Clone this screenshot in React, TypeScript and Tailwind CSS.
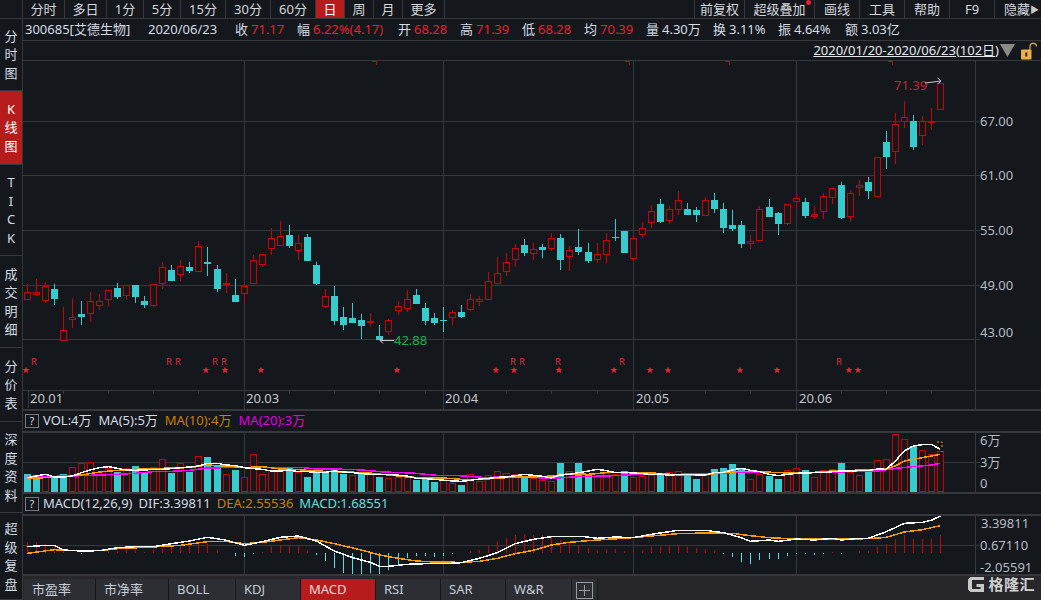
const BG = "#14171c";
const GRID = "#37383b";
const RED = "#cc0000";
const CYAN = "#38cbce";

// candle x positions: the original chart drops one extra pixel every ~20 bars
const barX = (i: number) =>
  27.5 + 9 * i + (i > 20 ? 1 : 0) + (i > 40 ? 1 : 0) + (i > 61 ? 1 : 0) + (i > 81 ? 1 : 0);

type Candle = [string, number, number, number, number];

const a: Candle[] = [
  ["r", 252, 277, 297, 300], ["r", 237, 276, 282, 287], ["r", 247, 259, 302, 308], ["c", 252, 267, 297, 315],
  ["r", 321, 391, 422, 422], ["r", 294, 352, 358, 384], ["c", 303, 342, 351, 375], ["r", 276, 304, 340, 366],
  ["r", 282, 304, 316, 330], ["r", 270, 271, 298, 321], ["c", 249, 264, 291, 297], ["r", 255, 256, 286, 300],
  ["c", 255, 255, 291, 309], ["c", 288, 303, 315, 324], ["r", 252, 253, 316, 321], ["r", 186, 202, 250, 267],
  ["c", 195, 210, 243, 243], ["r", 180, 199, 223, 243], ["c", 186, 201, 213, 219], ["r", 123, 139, 215, 215],
  ["c", 141, 186, 191, 228], ["c", 195, 207, 267, 276], ["r", 219, 249, 251, 279], ["c", 237, 285, 305, 305],
  ["r", 252, 258, 280, 312], ["r", 165, 181, 250, 250], ["r", 163, 163, 193, 201], ["r", 84, 115, 146, 165],
  ["r", 63, 109, 136, 136], ["c", 75, 105, 138, 144], ["r", 105, 130, 151, 180], ["c", 102, 111, 183, 183],
  ["c", 186, 195, 251, 255], ["r", 267, 289, 319, 324], ["c", 258, 288, 362, 375], ["c", 321, 351, 375, 390],
];

const b: Candle[] = [
  ["c", 369, 414, 429, 429], ["c", 402, 420, 438, 477], ["r", 399, 423, 425, 441], ["c", 435, 468, 480, 480],
  ["r", 418, 421, 455, 465], ["r", 363, 379, 392, 405], ["r", 330, 358, 386, 396], ["c", 327, 345, 372, 372],
  ["c", 369, 384, 423, 435], ["c", 399, 414, 429, 435], ["c", 381, 420, 423, 456], ["r", 390, 397, 413, 435],
  ["c", 375, 396, 411, 414], ["r", 342, 358, 389, 393], ["r", 348, 358, 365, 378], ["r", 276, 304, 359, 359],
  ["r", 231, 280, 311, 311], ["r", 219, 247, 275, 288], ["r", 192, 205, 239, 261], ["c", 177, 195, 219, 228],
  ["r", 189, 208, 220, 240], ["c", 192, 201, 210, 234], ["r", 159, 175, 206, 213], ["c", 162, 174, 240, 270],
  ["r", 198, 211, 230, 273], ["c", 147, 201, 216, 225], ["c", 189, 216, 243, 249], ["r", 189, 223, 239, 249],
  ["r", 159, 181, 223, 249], ["c", 117, 171, 174, 183], ["c", 153, 153, 219, 219], ["r", 165, 175, 236, 243],
  ["r", 126, 145, 163, 174], ["r", 75, 94, 127, 144], ["c", 57, 72, 126, 129], ["r", 78, 88, 121, 132],
  ["r", 33, 61, 88, 105], ["c", 69, 87, 105, 105], ["c", 81, 90, 105, 126],
];

const c: Candle[] = [
  ["r", 381, 391, 437, 437], ["c", 369, 390, 417, 429], ["c", 399, 417, 474, 489], ["c", 420, 465, 477, 483],
  ["c", 453, 465, 522, 534], ["r", 495, 514, 521, 537], ["r", 408, 418, 512, 512], ["c", 387, 411, 441, 441],
  ["c", 426, 429, 462, 495], ["r", 403, 403, 461, 465], ["r", 369, 385, 395, 417], ["c", 384, 396, 438, 444],
  ["r", 408, 432, 437, 447], ["r", 369, 379, 424, 447], ["r", 354, 355, 382, 402], ["c", 336, 345, 444, 447],
  ["r", 360, 370, 440, 456], ["r", 330, 346, 353, 378], ["c", 321, 336, 363, 387], ["r", 262, 262, 380, 380],
  ["c", 183, 216, 261, 297], ["r", 129, 163, 244, 282], ["r", 93, 142, 155, 174], ["c", 135, 153, 231, 240],
  ["r", 138, 154, 196, 225], ["r", 114, 153, 155, 180], ["r", 40, 40, 118, 118],
];

const scale = (list: Candle[], base: number) =>
  list.map(([t, w1, o, cl, w2]) => [t, base + w1 / 3, base + o / 3, base + cl / 3, base + w2 / 3] as Candle);

const candles = [...scale(a, 200), ...scale(b, 180), ...scale(c, 70)];

const volTypes =
  "ccrccrrrrrcrccrrcrcrccrcrrrrrcrccccc" + "rcrcrrrcccrrcrrrrrrcrrrcrccrrrcrrrcrrcc" + "rccccrrccrrcrrrcrrcrrrrcrrr";
const volTops = [
  219, 222, 223, 231, 220, 199, 186, 184, 212, 202, 213, 200, 195, 213, 197, 175, 216, 186, 213, 166, 168, 195, 220, 207, 229, 160,
  220, 208, 211, 202, 212, 228, 212, 214, 203, 218,
  222, 218, 215, 228, 232, 228, 228, 237, 230, 243, 235, 246, 252, 220, 240, 223, 211, 217, 220, 230, 230, 237, 241, 186, 211, 186,
  222, 223, 216, 220, 210, 229, 226, 222, 218, 214, 211, 218, 234,
  222, 204, 201, 189, 204, 235, 218, 225, 234, 208, 202, 207, 229, 208, 205, 186, 214, 223, 214, 178, 175, 95, 115, 135, 148, 160, 151,
];
const macdTops = [
  423, 423, 430, 433, 445, 456, 458, 456, 456, 450, 449, 445, 448, 453, 447, 440, 435, 433, 432, 427, 428, 446, 456, 466, 468, 460,
  453, 438, 433, 435, 435, 448, 462, 480, 500, 515,
  518, 518, 515, 518, 508, 492, 472, 465, 465, 467, 465, 459, 457, 450, 447, 434, 421, 412, 402, 400, 401, 403, 404, 418, 425, 431,
  442, 448, 445, 445, 450, 448, 446, 438, 437, 435, 433, 438, 440,
  444, 448, 460, 468, 482, 488, 477, 473, 473, 465, 458, 460, 462, 458, 453, 460, 456, 450, 450, 438, 430, 414, 402, 414, 413, 414, 402,
];

// [x, y] pairs as read off the three crops, x offset per crop
const line = (parts: [number, number[]][]) =>
  parts
    .flatMap(([dx, p]) => {
      const out: string[] = [];
      for (let i = 0; i < p.length; i += 2) out.push(`${dx + p[i] / 3},${400 + p[i + 1] / 3}`);
      return out;
    })
    .join(" ");

const ma5 = line([
  [0, [82, 230, 136, 220, 163, 228, 190, 228, 217, 225, 244, 215, 271, 207, 298, 200, 325, 197, 352, 202, 379, 207, 406, 208, 433, 207, 460, 205, 487, 205, 514, 203, 541, 200, 568, 198, 595, 195, 622, 187, 652, 187, 679, 192, 706, 194, 733, 200, 760, 203, 787, 205, 814, 210, 841, 210, 868, 207, 895, 212, 922, 212, 949, 214, 976, 214, 1003, 210, 1030, 213]],
  [350, [8, 215, 61, 220, 115, 220, 172, 225, 199, 232, 226, 233, 253, 235, 307, 240, 334, 241, 361, 238, 388, 234, 415, 232, 442, 229, 469, 228, 496, 224, 523, 220, 550, 223, 577, 226, 604, 231, 631, 222, 658, 220, 685, 215, 715, 210, 742, 205, 769, 209, 796, 215, 823, 214, 850, 216, 877, 218, 904, 221, 931, 219, 958, 223, 985, 220]],
  [690, [46, 222, 73, 215, 100, 214, 127, 207, 154, 202, 181, 208, 208, 212, 238, 220, 265, 224, 292, 220, 319, 217, 346, 216, 373, 215, 400, 215, 427, 212, 454, 210, 481, 210, 508, 209, 535, 209, 562, 204, 589, 205, 616, 180, 643, 150, 670, 135, 697, 131, 724, 130, 751, 145]],
]);
const ma10 = line([
  [0, [82, 232, 136, 230, 190, 227, 244, 222, 298, 213, 352, 208, 406, 205, 460, 203, 514, 201, 568, 200, 622, 192, 676, 195, 730, 200, 787, 197, 841, 204, 895, 206, 949, 210, 1003, 212]],
  [350, [50, 215, 115, 222, 172, 228, 226, 230, 280, 231, 334, 235, 388, 235, 442, 232, 496, 228, 550, 228, 604, 225, 658, 218, 715, 220, 769, 215, 823, 215, 877, 216, 931, 217, 985, 222]],
  [690, [46, 222, 100, 215, 154, 211, 208, 212, 265, 215, 319, 216, 373, 214, 427, 210, 481, 208, 535, 207, 589, 204, 616, 195, 643, 180, 697, 170, 751, 160]],
]);
const ma20 = line([
  [0, [82, 228, 244, 224, 298, 222, 352, 220, 406, 217, 460, 212, 514, 211, 568, 208, 622, 201, 676, 200, 730, 200, 900, 199, 949, 204]],
  [350, [0, 205, 50, 208, 100, 213, 186, 216, 260, 223, 325, 224, 400, 229, 520, 228, 604, 232, 685, 227, 769, 225, 850, 221, 985, 220]],
  [690, [46, 218, 154, 214, 265, 215, 373, 214, 481, 212, 562, 210, 589, 206, 616, 202, 670, 197, 724, 192, 751, 187]],
]);
const dif = line([
  [0, [82, 437, 136, 433, 163, 433, 190, 447, 244, 450, 298, 449, 352, 440, 406, 437, 460, 437, 514, 428, 568, 420, 622, 409, 676, 417, 733, 433, 787, 422, 841, 409, 895, 405, 949, 420, 1003, 450]],
  [350, [8, 470, 61, 484, 88, 496, 115, 496, 172, 490, 226, 488, 280, 488, 334, 485, 388, 472, 442, 455, 496, 428, 550, 415, 604, 407, 658, 407, 703, 407, 742, 412, 796, 408, 850, 410, 904, 400, 985, 388]],
  [690, [46, 388, 100, 395, 154, 410, 181, 421, 238, 417, 265, 421, 319, 414, 373, 417, 427, 412, 454, 417, 508, 412, 535, 412, 589, 392, 643, 367, 697, 364, 724, 358, 751, 345]],
]);
const dea = line([
  [0, [82, 457, 163, 446, 217, 449, 298, 449, 352, 443, 460, 438, 541, 433, 622, 422, 676, 421, 733, 428, 787, 424, 841, 417, 895, 410, 949, 417, 1003, 428]],
  [350, [34, 447, 88, 462, 145, 472, 199, 480, 253, 483, 334, 484, 388, 481, 442, 472, 496, 458, 550, 448, 604, 432, 658, 424, 703, 420, 769, 415, 823, 412, 904, 405, 985, 398]],
  [690, [46, 396, 127, 397, 181, 404, 238, 410, 319, 414, 427, 415, 535, 413, 589, 409, 643, 393, 697, 386, 751, 374]],
]);

const V_GRID = [244.5, 443.5, 633.5, 796.5, 975.5];
const H_GRID = [121.5, 175.5, 230.5, 285.5, 339.5];
const AXIS = ["67.00", "61.00", "55.00", "49.00", "43.00"];
const AXIS_Y = [121, 175, 230, 285, 332];
const TICKS = [63.5, 108.5, 153.5, 198.5, 289.5, 334.5, 379.5, 425.5, 506.5, 551.5, 597.5, 660.5, 705.5, 750.5, 841.5, 886.5, 931.5];
const MONTHS: [string, number][] = [["20.01", 30], ["20.03", 246], ["20.04", 445], ["20.05", 636], ["20.06", 799]];
const RS = [34, 169, 178, 215, 224, 513, 522, 558, 622, 839];
const STARS = [26, 206, 225, 261, 397, 496, 514, 559, 614, 650, 668, 740, 777, 849, 858];
const FLAGS = [375, 628, 728, 891];

function Star({ x, y }: { x: number; y: number }) {
  return (
    <polygon
      transform={`translate(${x} ${y})`}
      fill="#ee2233"
      points="0,-3.6 1,-1.1 3.6,-1.1 1.5,0.5 2.3,3.2 0,1.6 -2.3,3.2 -1.5,0.5 -3.6,-1.1 -1,-1.1"
    />
  );
}

function Grid({ top, bottom, rows }: { top: number; bottom: number; rows: number[] }) {
  return (
    <g stroke={GRID} strokeWidth="1" shapeRendering="crispEdges">
      {V_GRID.map((x) => (
        <line key={x} x1={x} x2={x} y1={top} y2={bottom} />
      ))}
      {rows.map((y) => (
        <line key={y} x1={23} x2={980} y1={y} y2={y} />
      ))}
    </g>
  );
}

function CandleChart() {
  return (
    <svg className="block w-[1018px] h-[349px]" viewBox="23 60 1018 349">
      <Grid top={60} bottom={409} rows={H_GRID} />
      <g stroke={GRID} shapeRendering="crispEdges">
        <line x1={23} x2={1041} y1={60.5} y2={60.5} />
        <line x1={23} x2={1041} y1={390.5} y2={390.5} />
        <line x1={28.5} x2={28.5} y1={390} y2={408} />
        {TICKS.map((x) => (
          <line key={x} x1={x} x2={x} y1={390} y2={394} />
        ))}
      </g>
      {FLAGS.map((x) => (
        <path key={x} d={`M${x - 3} 61.5H${x + 2}M${x + 1.5} 61V65`} stroke={RED} strokeWidth="1.5" fill="none" shapeRendering="crispEdges" />
      ))}
      <g shapeRendering="crispEdges">
        {candles.map(([t, w1, o, cl, w2], i) => {
          const x = barX(i);
          const color = t === "r" ? RED : CYAN;
          return (
            <g key={i}>
              <line x1={x} x2={x} y1={w1} y2={w2} stroke={color} strokeWidth="1" />
              {t === "r" ? (
                <rect x={x - 3} y={Math.round(o) + 0.5} width={6} height={Math.max(1, Math.round(cl - o))} fill={BG} stroke={RED} strokeWidth="1" />
              ) : (
                <rect x={x - 3.5} y={Math.round(o)} width={7} height={Math.max(1, Math.round(cl - o))} fill={CYAN} />
              )}
            </g>
          );
        })}
      </g>
      <text x={894} y={90} fontSize="13" fill="#d02030">71.39</text>
      <path d="M925 83L941 81M937.5 78L941 81L938 84" stroke="#c8c8c8" strokeWidth="1" fill="none" />
      <text x={394} y={345} fontSize="13" fill="#1fae4e">42.88</text>
      <path d="M394 340.5H380M383 337.5L380 340.5L383 343.5" stroke="#c8c8c8" strokeWidth="1" fill="none" />
      {RS.map((x) => (
        <text key={x} x={x} y={364.5} fontSize="9.5" fill="#d9303c" textAnchor="middle">R</text>
      ))}
      {STARS.map((x) => (
        <Star key={x} x={x} y={370} />
      ))}
      {AXIS.map((v, i) => (
        <text key={v} x={980} y={AXIS_Y[i] + 5} fontSize="13" fill="#b4bcc4">{v}</text>
      ))}
      {MONTHS.map(([m, x]) => (
        <text key={m} x={x} y={403} fontSize="13" fill="#c4c8cc">{m}</text>
      ))}
    </svg>
  );
}

function VolumeChart() {
  const bottom = 490.5;
  return (
    <svg className="block w-[1018px] h-[59px]" viewBox="23 432 1018 59">
      <Grid top={432} bottom={491} rows={[461.5]} />
      <g shapeRendering="crispEdges">
        {volTops.map((z, i) => {
          const x = barX(i);
          const top = Math.max(432.5, Math.round(400 + z / 3));
          return volTypes[i] === "r" ? (
            <rect key={i} x={x - 3} y={top + 0.5} width={6} height={bottom - top - 0.5} fill={BG} stroke={RED} />
          ) : (
            <rect key={i} x={x - 3.5} y={top} width={7} height={bottom + 0.5 - top} fill={CYAN} />
          );
        })}
        <polyline points={ma20} fill="none" stroke="#ff00ff" strokeWidth="1.5" />
        <polyline points={ma10} fill="none" stroke="#ff9a00" strokeWidth="1.5" />
        <polyline points={ma5} fill="none" stroke="#ffffff" strokeWidth="1.5" />
      </g>
      <path d="M937 441H942V447M942 450V451" stroke="#ffa500" strokeDasharray="2 2" fill="none" />
      <text x={980} y={444} fontSize="13" fill="#b4bcc4">6万</text>
      <text x={980} y={466} fontSize="13" fill="#b4bcc4">3万</text>
      <text x={980} y={487} fontSize="13" fill="#b4bcc4">0</text>
    </svg>
  );
}

function MacdChart() {
  const zero = 400 + 456 / 3;
  return (
    <svg className="block w-[1018px] h-[58px]" viewBox="23 515 1018 58">
      <Grid top={515} bottom={573} rows={[544.5]} />
      <g shapeRendering="crispEdges">
        {macdTops.map((z, i) => {
          if (z === 456) return null;
          const x = barX(i);
          const y = 400 + z / 3;
          return <line key={i} x1={x} x2={x} y1={y} y2={zero} stroke={z < 456 ? RED : "#4fe3e8"} strokeWidth="1" />;
        })}
        <polyline points={dea} fill="none" stroke="#ff9a00" strokeWidth="1.5" />
        <polyline points={dif} fill="none" stroke="#ffffff" strokeWidth="1.5" />
      </g>
      <text x={981} y={527} fontSize="13" fill="#b4bcc4">3.39811</text>
      <text x={980} y={549} fontSize="13" fill="#b4bcc4">0.67110</text>
      <text x={980} y={571} fontSize="13" fill="#b4bcc4">-2.05591</text>
    </svg>
  );
}

const LEFT_TABS = [
  ["分时", "w-[42px]"],
  ["多日", "w-[42px]"],
  ["1分", "w-[37px]"],
  ["5分", "w-[37px]"],
  ["15分", "w-[45px]"],
  ["30分", "w-[45px]"],
  ["60分", "w-[45px]"],
  ["日", "w-[29px]"],
  ["周", "w-[29px]"],
  ["月", "w-[29px]"],
  ["更多", "w-[42px]"],
];
const RIGHT_TABS = [
  ["前复权", "w-[50px]"],
  ["超级叠加", "w-[70px]"],
  ["画线", "w-[45px]"],
  ["工具", "w-[45px]"],
  ["帮助", "w-[45px]"],
  ["F9", "w-[45px]"],
];

function TopBar() {
  return (
    <div className="flex h-[19px] border-b border-[#37383b] text-[13px] leading-[18px] text-[#d4d8dc]">
      {LEFT_TABS.map(([label, w]) => (
        <div key={label} className={`${w} border-r border-[#37383b] text-center ${label === "日" ? "bg-[#b71c1c] text-white" : ""}`}>
          {label}
        </div>
      ))}
      <div className="w-[249px]" />
      <div className="h-full w-px bg-[#37383b]" />
      {RIGHT_TABS.map(([label, w]) => (
        <div key={label} className={`${w} relative border-r border-[#37383b] text-center`}>
          {label}
          {label === "超级叠加" && <span className="absolute right-[3px] top-0 size-[5px] rounded-full bg-[#f01c2c]" />}
        </div>
      ))}
      <div className="flex-1 overflow-hidden whitespace-nowrap pl-[9px]">
        隐藏<span className="text-[9px] align-[1px] text-[#c8c8c8]">▶</span>
      </div>
    </div>
  );
}

const INFO: [string, string, string, string][] = [
  ["收", "71.17", "w-[62px]", "text-[#e8202c]"],
  ["幅", "6.22%(4.17)", "w-[101px]", "text-[#e8202c]"],
  ["开", "68.28", "w-[62px]", "text-[#e8202c]"],
  ["高", "71.39", "w-[62px]", "text-[#e8202c]"],
  ["低", "68.28", "w-[62px]", "text-[#e8202c]"],
  ["均", "70.39", "w-[62px]", "text-[#e8202c]"],
  ["量", "4.30万", "w-[67px]", ""],
  ["换", "3.11%", "w-[65px]", ""],
  ["振", "4.64%", "w-[67px]", ""],
  ["额", "3.03亿", "w-[100px]", ""],
];

function InfoRow() {
  return (
    <div className="flex h-[22px] items-center border-b border-[#37383b] pl-[2px] text-[13px] text-[#d4dce4] whitespace-nowrap">
      <div className="w-[123px]">300685[艾德生物]</div>
      <div className="w-[87px]">2020/06/23</div>
      {INFO.map(([k, v, w, color]) => (
        <div key={k} className={`${w} flex gap-[3px]`}>
          <span>{k}</span>
          <span className={color}>{v}</span>
        </div>
      ))}
    </div>
  );
}

function RangeRow() {
  return (
    <div className="flex h-[19px] items-center justify-end pr-[3px] text-[13px] text-[#e4e8ec]">
      <span className="underline">2020/01/20-2020/06/23(102日)</span>
      <svg className="ml-[1px] mr-[5px]" width="15" height="15" viewBox="0 0 15 15">
        <path d="M0 1H15L7.5 14Z" fill="#8a8a8a" />
      </svg>
      <svg width="18" height="18" viewBox="0 0 18 18">
        <path d="M10 8V4.5C10 2.5 11.5 1.2 13.2 1.2C15 1.2 16.4 2.5 16.5 4.5" stroke="#d09a40" strokeWidth="1.4" fill="none" />
        <rect x="1" y="7.5" width="10.5" height="10" rx="1" fill="#e8b048" />
        <rect x="5.3" y="10.5" width="2" height="4" fill="#3a2a10" />
      </svg>
    </div>
  );
}

function HelpBox() {
  return <span className="flex size-[14px] items-center justify-center border border-[#77797c] text-[11px] text-[#d4d8dc]">?</span>;
}

function PanelHeader({ children }: { children: React.ReactNode }) {
  return (
    <div className="flex h-[24px] items-center border-y-2 border-[#37383b] pl-[2px] text-[13px] whitespace-nowrap">
      <HelpBox />
      {children}
    </div>
  );
}

const BOTTOM_TABS = [
  ["市盈率", "w-[72px] pl-[8px]"],
  ["市净率", "w-[73px] pl-[8px]"],
  ["BOLL", "w-[67px] pl-[8px]"],
  ["KDJ", "w-[65px] pl-[8px]"],
  ["MACD", "w-[75px] pl-[8px]"],
  ["RSI", "w-[65px] pl-[8px]"],
  ["SAR", "w-[65px] pl-[8px]"],
  ["W&R", "w-[66px] pl-[8px]"],
];

function BottomTabs() {
  return (
    <div className="relative flex h-[27px] border-t-2 border-[#37383b] bg-[#26262b] pl-[1px] pt-[3px] text-[13px] text-[#c4ccd4]">
      {BOTTOM_TABS.map(([label, cls]) => (
        <div
          key={label}
          className={`${cls} border-r border-[#14171c] leading-[21px] ${label === "MACD" ? "bg-[#b71c1c] text-[#f0d8d8]" : "bg-[#2d2d34]"}`}
        >
          {label}
        </div>
      ))}
      <div className="flex w-[26px] items-center justify-center bg-[#2d2d34] border-r border-[#14171c]">
        <svg width="17" height="17" viewBox="0 0 17 17" fill="none" stroke="#9a9a9e">
          <rect x="0.5" y="0.5" width="16" height="16" />
          <path d="M8.5 3V14M3 8.5H14" />
        </svg>
      </div>
      <div className="absolute right-[6px] top-0 flex items-center gap-[2px] text-[#cfcfcf]">
        <svg width="19" height="17" viewBox="0 0 19 17" fill="none">
          <path d="M17 2.5V1H3.5L1 3.5V13.5L3.5 16H17V8H9.5V11H13.5V13H5V4H17Z" fill="#c8c8c8" />
        </svg>
        <span className="text-[15px] font-bold leading-[17px] tracking-[0.5px]">格隆汇</span>
      </div>
    </div>
  );
}

const SIDE: [string[], string][] = [
  [["分", "时", "图"], "h-[72px]"],
  [["K", "线", "图"], "h-[74px] bg-[#b71c1c] text-white"],
  [["T", "I", "C", "K"], "h-[91px]"],
  [["成", "交", "明", "细"], "h-[92px]"],
  [["分", "价", "表"], "h-[74px]"],
  [["深", "度", "资", "料"], "h-[91px]"],
  [["超", "级", "复", "盘"], "h-[87px]"],
];

function Sidebar() {
  return (
    <div className="w-[23px] shrink-0 border-r border-[#37383b] text-[13px] leading-[18.5px] text-[#d4dce4]">
      <div className="h-[19px] border-b border-[#37383b]" />
      {SIDE.map(([chars, cls], i) => (
        <div key={i} className={`${cls} flex flex-col items-center justify-center border-b border-[#37383b]`}>
          {chars.map((ch) => (
            <span key={ch}>{ch}</span>
          ))}
        </div>
      ))}
    </div>
  );
}

export default function App() {
  return (
    <div className="flex h-[600px] w-[1041px] overflow-hidden bg-[#14171c] font-['Noto_Sans','Noto_Sans_CJK_SC',sans-serif]">
      <Sidebar />
      <div className="w-[1018px]">
        <TopBar />
        <InfoRow />
        <RangeRow />
        <CandleChart />
        <PanelHeader>
          <span className="ml-[4px] text-[#d4dce4]">VOL:4万</span>
          <span className="ml-[7px] text-[#d4dce4]">MA(5):5万</span>
          <span className="ml-[7px] text-[#c88000]">MA(10):4万</span>
          <span className="ml-[7px] text-[#e000e0]">MA(20):3万</span>
        </PanelHeader>
        <VolumeChart />
        <PanelHeader>
          <span className="ml-[4px] text-[#d4dce4]">MACD(12,26,9)</span>
          <span className="ml-[6px] text-[#d4dce4]">DIF:3.39811</span>
          <span className="ml-[6px] text-[#c88000]">DEA:2.55536</span>
          <span className="ml-[6px] text-[#60e0e0]">MACD:1.68551</span>
        </PanelHeader>
        <MacdChart />
        <BottomTabs />
      </div>
    </div>
  );
}
